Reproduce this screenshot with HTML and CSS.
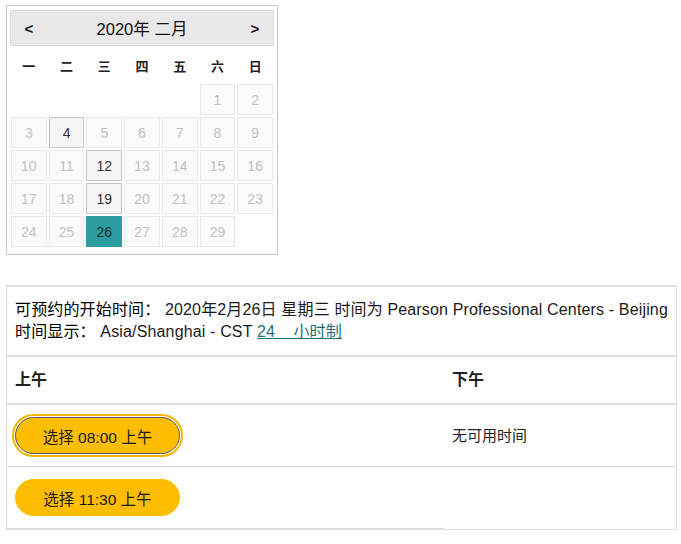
FILE: index.html
```html
<!DOCTYPE html>
<html lang="zh">
<head>
<meta charset="utf-8">
<title>预约</title>
<link rel="stylesheet" href="styles.css">
</head>
<body>
<div class="calendar">
  <div class="cal-head">
    <span class="nav">&lt;</span>
    <span class="title">2020年 二月</span>
    <span class="nav">&gt;</span>
  </div>
  <div class="weekdays">
    <span>一</span><span>二</span><span>三</span><span>四</span><span>五</span><span>六</span><span>日</span>
  </div>
  <div class="days">
    <span class="empty"></span><span class="empty"></span><span class="empty"></span><span class="empty"></span><span class="empty"></span>
    <span class="day">1</span><span class="day">2</span>
    <span class="day">3</span><span class="day avail">4</span><span class="day">5</span><span class="day">6</span><span class="day">7</span><span class="day">8</span><span class="day">9</span>
    <span class="day">10</span><span class="day">11</span><span class="day avail">12</span><span class="day">13</span><span class="day">14</span><span class="day">15</span><span class="day">16</span>
    <span class="day">17</span><span class="day">18</span><span class="day avail">19</span><span class="day">20</span><span class="day">21</span><span class="day">22</span><span class="day">23</span>
    <span class="day">24</span><span class="day">25</span><span class="day selected">26</span><span class="day">27</span><span class="day">28</span><span class="day">29</span>
  </div>
</div>

<div class="slots">
  <div class="info">
    <div class="line"><span class="label">可预约的开始时间：</span> 2020年2月26日 星期三 时间为 Pearson Professional Centers - Beijing</div>
    <div class="line"><span class="label">时间显示：</span> Asia/Shanghai - CST <a class="link" href="#">24&nbsp;&nbsp;&nbsp; 小时制</a></div>
  </div>
  <div class="row head">
    <div class="cell">上午</div>
    <div class="cell">下午</div>
  </div>
  <div class="row">
    <div class="cell"><button class="slot focused">选择 08:00 上午</button></div>
    <div class="cell text">无可用时间</div>
  </div>
  <div class="row last">
    <div class="cell"><button class="slot">选择 11:30 上午</button></div>
    <div class="cell"></div>
  </div>
</div>
</body>
</html>
```

FILE: styles.css
```css
* { box-sizing: border-box; }

body {
  margin: 0;
  padding: 5px 0 0 6px;
  background: #fff;
  font-family: "Liberation Sans", "Noto Sans CJK SC", sans-serif;
  color: #222;
}

.calendar {
  width: 272px;
  border: 1px solid #c8c8c8;
  padding: 4px 3px 7px 3px;
}

.cal-head {
  height: 36px;
  background: #e8e8e8;
  border: 1px solid #dcdcdc;
  display: flex;
  align-items: center;
  justify-content: space-between;
  padding: 0 13px 0 13px;
  font-size: 16.5px;
  font-weight: 400;
  color: #111;
}

.cal-head .nav {
  width: 10px;
  text-align: center;
  font-weight: 700;
  font-size: 15px;
}

.weekdays {
  height: 38px;
  margin: 0 1px;
  display: grid;
  grid-template-columns: repeat(7, 1fr);
  gap: 2px;
  align-items: center;
  text-align: center;
  font-size: 13px;
  font-weight: 700;
  color: #222;
}

.days {
  margin: 0 1px;
  display: grid;
  grid-template-columns: repeat(7, 1fr);
  grid-auto-rows: 31px;
  gap: 2px;
}

.day {
  display: flex;
  align-items: center;
  justify-content: center;
  border: 1px solid #e8e8e8;
  background: #fafafa;
  color: #c0c0c0;
  font-size: 14px;
}

.day.avail {
  border-color: #c4c4c4;
  background: #f5f5f5;
  color: #333;
}

.day.selected {
  border-color: #2b9ca0;
  background: #2b9ca0;
  color: #1b2b33;
}

.slots {
  margin-top: 30px;
  width: 671px;
  border: 1px solid #dedede;
  border-top-width: 2px;
  border-bottom: 0;
  font-size: 16px;
  line-height: 22px;
}

.info {
  padding: 12px 8px 12px 8px;
  border-bottom: 2px solid #dedede;
  color: #1a1a1a;
  letter-spacing: 0.15px;
}

.label {
  font-weight: 400;
  color: #000;
}

.link {
  color: #1f6f73;
  text-decoration: underline;
}

.row {
  display: grid;
  grid-template-columns: 437px 1fr;
  border-bottom: 1px solid #dedede;
}

.row.head {
  border-bottom: 2px solid #dedede;
  font-weight: 600;
}

.row.last {
  border-bottom: 0;
}

.row.last .cell:first-child {
  border-bottom: 2px solid #dedede;
}

.row.last .cell:last-child {
  border-bottom: 1px solid #dedede;
}

.cell {
  padding: 12px 8px;
}

.cell.text {
  display: flex;
  align-items: center;
  font-size: 15px;
}

.slot {
  display: block;
  width: 165px;
  height: 37px;
  border: 1px solid #ffbd00;
  border-radius: 19px;
  background: #ffbd00;
  color: #1a1a1a;
  font-family: "Liberation Sans", "Noto Sans CJK SC", sans-serif;
  font-size: 15.5px;
  padding: 0;
  cursor: pointer;
}

.slot.focused {
  border-color: #555;
  outline: 2px solid #f7b500;
  outline-offset: 1px;
}
```
